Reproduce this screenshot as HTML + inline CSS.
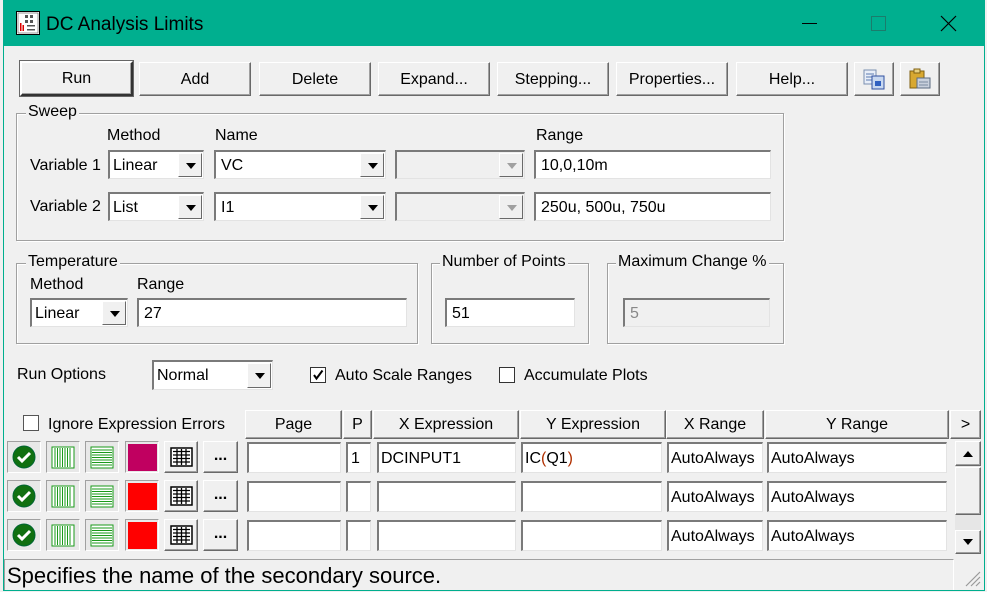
<!DOCTYPE html>
<html><head><meta charset="utf-8"><style>
*{box-sizing:border-box;margin:0;padding:0}
body{width:987px;height:592px;background:#f0f0f0;font-family:"Liberation Sans",sans-serif;font-size:16px;color:#000;position:relative;overflow:hidden}
.a{position:absolute}
.win{left:3px;top:0;width:982px;height:591px;border:1px solid #00ae8e;border-top:none}
.title{left:3px;top:0;width:982px;height:46px;background:#00af8f}
.btn{position:absolute;background:#f0f0f0;border:1px solid;border-color:#fff #696969 #696969 #fff;box-shadow:inset -1px -1px 0 #a0a0a0;text-align:center;font-size:16px}
.in{position:absolute;background:#fff;border-top:2px solid #7a7a7a;border-left:2px solid #7a7a7a;border-right:1px solid #e3e3e3;border-bottom:1px solid #e3e3e3;padding-left:5px;font-size:16px;white-space:nowrap;overflow:hidden}
.dis{background:#f0f0f0;color:#888}
.arr{position:absolute;right:1px;top:1px;bottom:1px;width:24px;background:#f0f0f0;border:1px solid;border-color:#fff #696969 #696969 #fff}
.arr:after{content:"";position:absolute;left:7px;top:9px;border-left:5px solid transparent;border-right:5px solid transparent;border-top:6px solid #000}
.arr.g:after{border-top-color:#a0a0a0}
.grp{position:absolute;border:1px solid #a0a0a0;box-shadow:1px 1px 0 #fff, inset 1px 1px 0 #fff}
.lg{position:absolute;background:#f0f0f0;padding:0 2px;top:-11px;left:9px;font-size:16px}
.cb{position:absolute;width:16px;height:16px;background:#fff;border:1px solid #333}
.ib{position:absolute;width:34px;height:32px;background:#f0f0f0;border:1px solid;border-color:#fff #696969 #696969 #fff;box-shadow:inset -1px -1px 0 #a0a0a0}
.ib.s{border-color:#a0a0a0 #fff #fff #a0a0a0;box-shadow:none;background:#e8e8e8}
.hd{position:absolute;top:410px;height:29px;line-height:28px}
</style></head><body>
<div class="a title"></div>
<div class="a win"></div>
<svg class="a" style="left:16px;top:11px" width="24" height="24" viewBox="0 0 24 24"><rect x="0.5" y="0.5" width="23" height="23" fill="#fff" stroke="#000"/><rect x="2" y="2" width="20" height="20" fill="#fff" stroke="#555" stroke-width=".6"/><g fill="#555"><rect x="9" y="4" width="3" height="3"/><rect x="14" y="4" width="3" height="3"/><rect x="9" y="9" width="3" height="3"/><rect x="14" y="9" width="3" height="3"/><rect x="11" y="14" width="8" height="1.5"/><rect x="11" y="18" width="8" height="1.5"/></g><g fill="#d00"><rect x="4" y="12" width="1.5" height="8"/><rect x="6.5" y="14" width="1.5" height="6"/></g></svg>
<div class="a" style="left:46px;top:14px;font-size:19px">DC Analysis Limits</div>
<div class="a" style="left:802px;top:23px;width:15px;height:1px;background:#000"></div>
<div class="a" style="left:871px;top:16px;width:15px;height:15px;border:1px solid #1b7d6c"></div>
<svg class="a" style="left:940px;top:15px" width="17" height="17"><path d="M1 1L16 16M16 1L1 16" stroke="#000" stroke-width="1.2"/></svg>

<div class="btn" style="left:20px;top:61px;width:113px;height:35px;border:2px solid;border-color:#fff #333 #333 #fff;outline:1px solid #666;line-height:32px">Run</div>
<div class="btn" style="left:139px;top:62px;width:112px;height:34px;line-height:33px">Add</div>
<div class="btn" style="left:259px;top:62px;width:112px;height:34px;line-height:33px">Delete</div>
<div class="btn" style="left:378px;top:62px;width:112px;height:34px;line-height:33px">Expand...</div>
<div class="btn" style="left:497px;top:62px;width:112px;height:34px;line-height:33px">Stepping...</div>
<div class="btn" style="left:616px;top:62px;width:112px;height:34px;line-height:33px">Properties...</div>
<div class="btn" style="left:736px;top:62px;width:112px;height:34px;line-height:33px">Help...</div>
<div class="btn" style="left:854px;top:62px;width:40px;height:34px"><svg width="26" height="24" style="margin-top:4px"><rect x="3" y="3" width="12" height="14" fill="#e8eef8" stroke="#7a8fb0"/><path d="M5 7h8M5 10h8M5 13h8" stroke="#5a7ab0"/><rect x="11" y="9" width="12" height="13" fill="#c8d8f0" stroke="#3050a0"/><rect x="14" y="14" width="6" height="5" fill="#3060c0"/></svg></div>
<div class="btn" style="left:900px;top:62px;width:40px;height:34px"><svg width="26" height="24" style="margin-top:4px"><rect x="3" y="4" width="14" height="17" fill="#d8a830" stroke="#806010"/><rect x="7" y="2" width="6" height="4" fill="#e8d080" stroke="#806010"/><rect x="10" y="11" width="13" height="10" fill="#c8d0dc" stroke="#5a6a80"/><path d="M12 15h9M12 18h9" stroke="#7a8aa0"/></svg></div>

<div class="grp" style="left:16px;top:113px;width:768px;height:128px"><span class="lg">Sweep</span></div>
<div class="a" style="left:107px;top:127px">Method</div>
<div class="a" style="left:215px;top:127px">Name</div>
<div class="a" style="left:536px;top:127px">Range</div>
<div class="a" style="left:30px;top:157px">Variable 1</div>
<div class="a" style="left:30px;top:198px">Variable 2</div>
<div class="in" style="left:108px;top:150px;width:96px;height:29px;line-height:27px;padding-left:3px">Linear<div class="arr"></div></div>
<div class="in" style="left:214px;top:150px;width:172px;height:29px;line-height:27px">VC<div class="arr"></div></div>
<div class="in dis" style="left:395px;top:150px;width:130px;height:29px"><div class="arr g"></div></div>
<div class="in" style="left:534px;top:150px;width:237px;height:29px;line-height:27px">10,0,10m</div>
<div class="in" style="left:108px;top:192px;width:96px;height:29px;line-height:27px;padding-left:3px">List<div class="arr"></div></div>
<div class="in" style="left:214px;top:192px;width:172px;height:29px;line-height:27px">I1<div class="arr"></div></div>
<div class="in dis" style="left:395px;top:192px;width:130px;height:29px"><div class="arr g"></div></div>
<div class="in" style="left:534px;top:192px;width:237px;height:29px;line-height:27px">250u, 500u, 750u</div>

<div class="grp" style="left:16px;top:263px;width:402px;height:81px"><span class="lg">Temperature</span></div>
<div class="a" style="left:30px;top:276px">Method</div>
<div class="a" style="left:137px;top:276px">Range</div>
<div class="in" style="left:30px;top:298px;width:98px;height:29px;line-height:27px;padding-left:3px">Linear<div class="arr"></div></div>
<div class="in" style="left:137px;top:298px;width:270px;height:29px;line-height:27px">27</div>
<div class="grp" style="left:431px;top:263px;width:158px;height:81px"><span class="lg" style="left:8px">Number of Points</span></div>
<div class="in" style="left:445px;top:298px;width:130px;height:29px;line-height:27px">51</div>
<div class="grp" style="left:607px;top:263px;width:177px;height:81px"><span class="lg" style="left:8px">Maximum Change %</span></div>
<div class="in dis" style="left:623px;top:298px;width:147px;height:29px;line-height:27px;background:#f0f0f0">5</div>

<div class="a" style="left:17px;top:366px">Run Options</div>
<div class="in" style="left:152px;top:360px;width:121px;height:30px;line-height:28px;padding-left:3px">Normal<div class="arr"></div></div>
<div class="cb" style="left:310px;top:367px"><svg width="14" height="14" style="position:absolute;left:0;top:0"><path d="M3 7l2.5 3.5 6-8" stroke="#000" stroke-width="2" fill="none"/></svg></div>
<div class="a" style="left:335px;top:367px">Auto Scale Ranges</div>
<div class="cb" style="left:499px;top:367px"></div>
<div class="a" style="left:524px;top:367px">Accumulate Plots</div>

<div class="cb" style="left:23px;top:415px;border-color:#555"></div>
<div class="a" style="left:48px;top:416px">Ignore Expression Errors</div>
<div class="btn hd" style="left:245px;width:97px">Page</div>
<div class="btn hd" style="left:343px;width:29px">P</div>
<div class="btn hd" style="left:373px;width:146px">X Expression</div>
<div class="btn hd" style="left:520px;width:146px">Y Expression</div>
<div class="btn hd" style="left:666px;width:98px">X Range</div>
<div class="btn hd" style="left:765px;width:184px">Y Range</div>
<div class="btn hd" style="left:950px;width:31px">&gt;</div>

<!-- row 1 -->
<div class="ib s" style="left:7px;top:441px"><svg width="32" height="30"><circle cx="16" cy="15" r="11" fill="#107010" stroke="#063"/><path d="M10 15l4 4 8-8" stroke="#fff" stroke-width="3" fill="none"/></svg></div>
<div class="ib s" style="left:46px;top:441px"><svg width="32" height="30"><rect x="5" y="5" width="22" height="21" fill="#fff" stroke="#1a9a1a"/><path d="M8 6v19M10.5 6v19M13 6v19M15.5 6v19M18 6v19M20.5 6v19M23 6v19" stroke="#1a9a1a"/></svg></div>
<div class="ib s" style="left:85px;top:441px"><svg width="32" height="30"><rect x="5" y="5" width="22" height="21" fill="#fff" stroke="#1a9a1a"/><path d="M6 8h20M6 10.5h20M6 13h20M6 15.5h20M6 18h20M6 20.5h20M6 23h20" stroke="#1a9a1a"/></svg></div>
<div class="ib s" style="left:125px;top:441px"><div style="position:absolute;left:2px;top:2px;width:29px;height:27px;background:#c00060"></div></div>
<div class="ib" style="left:164px;top:441px"><svg width="32" height="30"><rect x="6" y="6" width="21" height="18" fill="#fff" stroke="#000" stroke-width="1.5"/><path d="M8 9.5h17M8 13h17M8 16.5h17M8 20h17M12 7v16M16.5 7v16M21 7v16" stroke="#000" stroke-width="1.3"/></svg></div>
<div class="ib" style="left:203px;top:441px;width:35px;text-align:center;line-height:28px;font-weight:bold">...</div>
<div class="in" style="left:247px;top:442px;width:94px;height:31px"></div>
<div class="in" style="left:346px;top:442px;width:25px;height:31px;line-height:29px;padding-left:3px">1</div>
<div class="in" style="left:377px;top:442px;width:139px;height:31px;line-height:29px;padding-left:2px">DCINPUT1</div>
<div class="in" style="left:521px;top:442px;width:141px;height:31px;line-height:29px;padding-left:2px">IC<span style="color:#b03000">(</span>Q1<span style="color:#b03000">)</span></div>
<div class="in" style="left:667px;top:442px;width:96px;height:31px;line-height:29px;padding-left:2px">AutoAlways</div>
<div class="in" style="left:767px;top:442px;width:180px;height:31px;line-height:29px;padding-left:2px">AutoAlways</div>

<!-- row 2 -->
<div class="ib s" style="left:7px;top:480px"><svg width="32" height="30"><circle cx="16" cy="15" r="11" fill="#107010" stroke="#063"/><path d="M10 15l4 4 8-8" stroke="#fff" stroke-width="3" fill="none"/></svg></div>
<div class="ib s" style="left:46px;top:480px"><svg width="32" height="30"><rect x="5" y="5" width="22" height="21" fill="#fff" stroke="#1a9a1a"/><path d="M8 6v19M10.5 6v19M13 6v19M15.5 6v19M18 6v19M20.5 6v19M23 6v19" stroke="#1a9a1a"/></svg></div>
<div class="ib s" style="left:85px;top:480px"><svg width="32" height="30"><rect x="5" y="5" width="22" height="21" fill="#fff" stroke="#1a9a1a"/><path d="M6 8h20M6 10.5h20M6 13h20M6 15.5h20M6 18h20M6 20.5h20M6 23h20" stroke="#1a9a1a"/></svg></div>
<div class="ib s" style="left:125px;top:480px"><div style="position:absolute;left:2px;top:2px;width:29px;height:27px;background:#f00"></div></div>
<div class="ib" style="left:164px;top:480px"><svg width="32" height="30"><rect x="6" y="6" width="21" height="18" fill="#fff" stroke="#000" stroke-width="1.5"/><path d="M8 9.5h17M8 13h17M8 16.5h17M8 20h17M12 7v16M16.5 7v16M21 7v16" stroke="#000" stroke-width="1.3"/></svg></div>
<div class="ib" style="left:203px;top:480px;width:35px;text-align:center;line-height:28px;font-weight:bold">...</div>
<div class="in" style="left:247px;top:481px;width:94px;height:31px"></div>
<div class="in" style="left:346px;top:481px;width:25px;height:31px"></div>
<div class="in" style="left:377px;top:481px;width:139px;height:31px"></div>
<div class="in" style="left:521px;top:481px;width:141px;height:31px"></div>
<div class="in" style="left:667px;top:481px;width:96px;height:31px;line-height:29px;padding-left:2px">AutoAlways</div>
<div class="in" style="left:767px;top:481px;width:180px;height:31px;line-height:29px;padding-left:2px">AutoAlways</div>

<!-- row 3 -->
<div class="ib s" style="left:7px;top:519px"><svg width="32" height="30"><circle cx="16" cy="15" r="11" fill="#107010" stroke="#063"/><path d="M10 15l4 4 8-8" stroke="#fff" stroke-width="3" fill="none"/></svg></div>
<div class="ib s" style="left:46px;top:519px"><svg width="32" height="30"><rect x="5" y="5" width="22" height="21" fill="#fff" stroke="#1a9a1a"/><path d="M8 6v19M10.5 6v19M13 6v19M15.5 6v19M18 6v19M20.5 6v19M23 6v19" stroke="#1a9a1a"/></svg></div>
<div class="ib s" style="left:85px;top:519px"><svg width="32" height="30"><rect x="5" y="5" width="22" height="21" fill="#fff" stroke="#1a9a1a"/><path d="M6 8h20M6 10.5h20M6 13h20M6 15.5h20M6 18h20M6 20.5h20M6 23h20" stroke="#1a9a1a"/></svg></div>
<div class="ib s" style="left:125px;top:519px"><div style="position:absolute;left:2px;top:2px;width:29px;height:27px;background:#f00"></div></div>
<div class="ib" style="left:164px;top:519px"><svg width="32" height="30"><rect x="6" y="6" width="21" height="18" fill="#fff" stroke="#000" stroke-width="1.5"/><path d="M8 9.5h17M8 13h17M8 16.5h17M8 20h17M12 7v16M16.5 7v16M21 7v16" stroke="#000" stroke-width="1.3"/></svg></div>
<div class="ib" style="left:203px;top:519px;width:35px;text-align:center;line-height:28px;font-weight:bold">...</div>
<div class="in" style="left:247px;top:520px;width:94px;height:31px"></div>
<div class="in" style="left:346px;top:520px;width:25px;height:31px"></div>
<div class="in" style="left:377px;top:520px;width:139px;height:31px"></div>
<div class="in" style="left:521px;top:520px;width:141px;height:31px"></div>
<div class="in" style="left:667px;top:520px;width:96px;height:31px;line-height:29px;padding-left:2px">AutoAlways</div>
<div class="in" style="left:767px;top:520px;width:180px;height:31px;line-height:29px;padding-left:2px">AutoAlways</div>

<div class="a" style="left:955px;top:441px;width:26px;height:113px;background:#e6e6e6"></div>
<div class="btn" style="left:955px;top:441px;width:26px;height:25px"><div style="position:absolute;left:7px;top:9px;border-left:5px solid transparent;border-right:5px solid transparent;border-bottom:6px solid #000"></div></div>
<div class="btn" style="left:955px;top:467px;width:26px;height:48px"></div>
<div class="btn" style="left:955px;top:530px;width:26px;height:24px"><div style="position:absolute;left:7px;top:8px;border-left:5px solid transparent;border-right:5px solid transparent;border-top:6px solid #000"></div></div>

<div class="a" style="left:4px;top:559px;width:950px;height:31px;border-top:1px solid #a0a0a0;border-left:1px solid #a0a0a0;border-right:1px solid #fff"></div>
<div class="a" style="left:7px;top:563px;font-size:22px">Specifies the name of the secondary source.</div>
<svg class="a" style="left:962px;top:568px" width="20" height="20"><path d="M18 4L4 18M18 9L9 18M18 14L14 18" stroke="#999" stroke-width="1.2"/></svg>
</body></html>
